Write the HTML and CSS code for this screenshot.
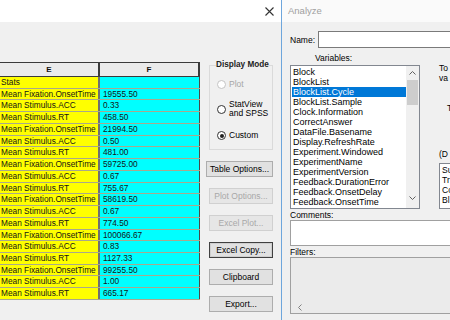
FILE: index.html
```html
<!doctype html>
<html>
    <head>
        <title>Analyze</title>
        <meta charset="utf-8">
        <link rel="stylesheet" href="styles.css">
    </head>
    <body>
        <div class="leftwin">
            <div class="titlebar">
                <svg class="close" width="9" height="9" viewBox="0 0 9 9"><path d="M0.5 0.5 L8.5 8.5 M8.5 0.5 L0.5 8.5" stroke="#333" stroke-width="1.1" fill="none"/></svg>
            </div>
            <div class="leftbody">
                <div class="sheet">
                    <div class="sheethead">
                        <div class="hcol colE">E</div>
                        <div class="hcol colF">F</div>
                    </div>
                    <div class="row"><div class="cellE">Stats</div><div class="cellF"></div></div>
                    <div class="row"><div class="cellE">Mean Fixation.OnsetTime</div><div class="cellF">19555.50</div></div>
                    <div class="row"><div class="cellE">Mean Stimulus.ACC</div><div class="cellF">0.33</div></div>
                    <div class="row"><div class="cellE">Mean Stimulus.RT</div><div class="cellF">458.50</div></div>
                    <div class="row"><div class="cellE">Mean Fixation.OnsetTime</div><div class="cellF">21994.50</div></div>
                    <div class="row"><div class="cellE">Mean Stimulus.ACC</div><div class="cellF">0.50</div></div>
                    <div class="row"><div class="cellE">Mean Stimulus.RT</div><div class="cellF">481.00</div></div>
                    <div class="row"><div class="cellE">Mean Fixation.OnsetTime</div><div class="cellF">59725.00</div></div>
                    <div class="row"><div class="cellE">Mean Stimulus.ACC</div><div class="cellF">0.67</div></div>
                    <div class="row"><div class="cellE">Mean Stimulus.RT</div><div class="cellF">755.67</div></div>
                    <div class="row"><div class="cellE">Mean Fixation.OnsetTime</div><div class="cellF">58619.50</div></div>
                    <div class="row"><div class="cellE">Mean Stimulus.ACC</div><div class="cellF">0.67</div></div>
                    <div class="row"><div class="cellE">Mean Stimulus.RT</div><div class="cellF">774.50</div></div>
                    <div class="row"><div class="cellE">Mean Fixation.OnsetTime</div><div class="cellF">100066.67</div></div>
                    <div class="row"><div class="cellE">Mean Stimulus.ACC</div><div class="cellF">0.83</div></div>
                    <div class="row"><div class="cellE">Mean Stimulus.RT</div><div class="cellF">1127.33</div></div>
                    <div class="row"><div class="cellE">Mean Fixation.OnsetTime</div><div class="cellF">99255.50</div></div>
                    <div class="row"><div class="cellE">Mean Stimulus.ACC</div><div class="cellF">1.00</div></div>
                    <div class="row"><div class="cellE">Mean Stimulus.RT</div><div class="cellF">665.17</div></div>
                </div>
                <div class="side">
                    <fieldset class="modebox">
                        <legend>Display Mode</legend>
                        <div class="radio disabled plotradio"><span class="dot"></span>Plot</div>
                        <div class="radio statradio"><span class="dot"></span><span>StatView<br>and SPSS</span></div>
                        <div class="radio customradio"><span class="dot checked"></span>Custom</div>
                    </fieldset>
                    <button class="btn wide">Table Options...</button>
                    <button class="btn" disabled>Plot Options...</button>
                    <button class="btn" disabled>Excel Plot...</button>
                    <button class="btn default">Excel Copy...</button>
                    <button class="btn">Clipboard</button>
                    <button class="btn">Export...</button>
                </div>
            </div>
        </div>
        <div class="anwin">
            <div class="antitle">Analyze</div>
            <div class="anbody">
                <div class="namerow">
                    <span class="namelabel">Name:</span>
                    <div class="namebox"></div>
                </div>
                <div class="vars">
                    <div class="varscol">
                        <div class="varslabel">Variables:</div>
                        <div class="listbox">
                            <div class="items">
                                <div class="item">Block</div>
                                <div class="item">BlockList</div>
                                <div class="item selected">BlockList.Cycle</div>
                                <div class="item">BlockList.Sample</div>
                                <div class="item">Clock.Information</div>
                                <div class="item">CorrectAnswer</div>
                                <div class="item">DataFile.Basename</div>
                                <div class="item">Display.RefreshRate</div>
                                <div class="item">Experiment.Windowed</div>
                                <div class="item">ExperimentName</div>
                                <div class="item">ExperimentVersion</div>
                                <div class="item">Feedback.DurationError</div>
                                <div class="item">Feedback.OnsetDelay</div>
                                <div class="item">Feedback.OnsetTime</div>
                            </div>
                            <div class="vscroll">
                                <div class="arrow"><svg width="7" height="4" viewBox="0 0 7 4"><path d="M0.5 3.5 L3.5 0.5 L6.5 3.5" stroke="#606060" fill="none"/></svg></div>
                                <div class="thumb"></div>
                                <div class="track"></div>
                                <div class="arrow down"><svg width="7" height="4" viewBox="0 0 7 4"><path d="M0.5 0.5 L3.5 3.5 L6.5 0.5" stroke="#606060" fill="none"/></svg></div>
                            </div>
                        </div>
                    </div>
                    <div class="varsside">
                        <div class="sidetext first">To</div>
                        <div class="sidetext">va</div>
                        <div class="sidetext gapT">T</div>
                        <div class="sidetext gapD">(D</div>
                        <div class="smallbox">
                            <div>Su</div>
                            <div>Tr</div>
                            <div>Co</div>
                            <div>Bl</div>
                        </div>
                    </div>
                </div>
                <div class="anlabel">Comments:</div>
                <div class="commentbox"></div>
                <div class="anlabel">Filters:</div>
                <div class="filterbox">
                    <div class="hscroll"><svg width="4" height="7" viewBox="0 0 4 7"><path d="M3.5 0.5 L0.5 3.5 L3.5 6.5" stroke="#808080" fill="none"/></svg></div>
                </div>
            </div>
        </div>
    </body>
</html>
```

FILE: styles.css
```css
body {
    margin: 0;
    width: 450px;
    height: 320px;
    overflow: hidden;
    display: flex;
    background: #f0f0f0;
    font-family: "Liberation Sans", Arial, sans-serif;
    color: #000;
}
.leftwin {
    width: 281px;
    height: 320px;
    border-right: 1px solid #6ea6dc;
    display: flex;
    flex-direction: column;
    flex: none;
}
.titlebar {
    height: 22px;
    background: #fff;
    display: flex;
    align-items: center;
    justify-content: flex-end;
    padding-right: 7px;
}
.leftbody {
    flex: 1;
    display: flex;
    background: #f0f0f0;
}
.sheet {
    width: 200px;
    margin-top: 40px;
    font-size: 8.3px;
    color: #141414;
}
.sheethead {
    display: flex;
    height: 15px;
    box-sizing: border-box;
    border-top: 1px solid #3a3a3a;
    border-bottom: 1px solid #3a3a3a;
    background: #ebebeb;
    font-weight: bold;
    font-size: 8px;
    line-height: 13px;
}
.hcol {
    text-align: center;
    border-right: 2px solid #3a3a3a;
}
.colE {
    width: 98px;
}
.colF {
    width: 98px;
}
.row {
    display: flex;
    height: 11.74px;
    box-sizing: border-box;
    border-bottom: 1px solid #a8a88c;
    line-height: 11px;
}
.cellE {
    width: 97px;
    padding-left: 1px;
    background: #ffff00;
    border-right: 2px solid #707070;
    white-space: nowrap;
    overflow: hidden;
}
.cellF {
    width: 96px;
    padding-left: 3px;
    background: #00ffff;
    border-right: 1px solid #4a4a4a;
}
.side {
    width: 64px;
    margin-left: 9px;
    display: flex;
    flex-direction: column;
}
.modebox {
    margin: 38px 0 0 0;
    padding: 0 0 0 7px;
    height: 90px;
    box-sizing: border-box;
    border: 1px solid #dadada;
    font-size: 8.5px;
}
.modebox legend {
    padding: 0;
    margin-left: -1px;
    font-weight: bold;
    font-size: 8.2px;
    color: #222;
    line-height: 10px;
    white-space: nowrap;
}
.radio {
    display: flex;
    align-items: center;
    gap: 3px;
    height: 11px;
    line-height: 9px;
}
.plotradio {
    margin-top: 9px;
}
.statradio {
    margin-top: 10px;
    height: 18px;
}
.customradio {
    margin-top: 12px;
}
.disabled {
    color: #a6a6a6;
}
.dot {
    width: 7px;
    height: 7px;
    border: 1px solid #333;
    border-radius: 50%;
    background: #fff;
    flex: none;
    display: flex;
    align-items: center;
    justify-content: center;
}
.disabled .dot {
    border-color: #c4c4c4;
}
.dot.checked::after {
    content: "";
    width: 4px;
    height: 4px;
    border-radius: 50%;
    background: #222;
}
.btn {
    width: 64px;
    height: 16px;
    margin-top: 11px;
    padding: 0;
    font-family: "Liberation Sans", Arial, sans-serif;
    font-size: 8.5px;
    color: #000;
    background: #e1e1e1;
    border: 1px solid #adadad;
    white-space: nowrap;
}
.btn.wide {
    width: 67px;
    margin-left: -3px;
}
.btn:disabled {
    color: #a8a8a8;
    background: #e6e6e6;
    border-color: #d0d0d0;
}
.btn.default {
    border: 1px solid #404040;
    box-shadow: inset 0 0 0 1px #cfcfcf;
}
.anwin {
    flex: 1;
    display: flex;
    flex-direction: column;
    overflow: hidden;
    background: #f0f0f0;
}
.antitle {
    height: 22px;
    flex: none;
    background: #fafafa;
    color: #a0a0a0;
    font-size: 9.5px;
    line-height: 22px;
    padding-left: 6px;
}
.anbody {
    padding-left: 8px;
    font-size: 8.5px;
}
.namerow {
    display: flex;
    align-items: center;
    margin-top: 9px;
    height: 17px;
}
.namelabel {
    width: 28px;
    flex: none;
}
.namebox {
    width: 160px;
    height: 17px;
    box-sizing: border-box;
    flex: none;
    border: 1px solid #7a7a7a;
    background: #fff;
}
.vars {
    display: flex;
}
.varscol {
    width: 130px;
    flex: none;
}
.varslabel {
    margin: 5px 0 0 25px;
    line-height: 10px;
}
.listbox {
    margin-top: 2px;
    height: 144px;
    box-sizing: border-box;
    border: 1px solid #828790;
    background: #fff;
    display: flex;
}
.items {
    flex: 1;
    padding: 1px 0 0 1px;
    overflow: hidden;
    font-size: 9px;
}
.item {
    height: 10px;
    line-height: 10px;
    padding-left: 1px;
    white-space: nowrap;
}
.item.selected {
    background: #0078d7;
    color: #fff;
}
.vscroll {
    width: 13px;
    background: #f0f0f0;
    display: flex;
    flex-direction: column;
}
.arrow {
    height: 13px;
    display: flex;
    align-items: center;
    justify-content: center;
}
.arrow.down {
    margin-bottom: 4px;
}
.thumb {
    height: 25px;
    margin: 1px 1px 0 1px;
    background: #cdcdcd;
}
.track {
    flex: 1;
}
.varsside {
    margin-left: 19px;
    width: 40px;
    flex: none;
}
.sidetext {
    line-height: 10px;
    height: 10px;
    white-space: nowrap;
}
.sidetext.first {
    margin-top: 15px;
}
.sidetext.gapT {
    margin: 20px 0 0 8px;
}
.sidetext.gapD {
    margin-top: 36px;
}
.smallbox {
    margin-top: 4px;
    height: 46px;
    width: 30px;
    box-sizing: border-box;
    border: 1px solid #828790;
    background: #fff;
    padding: 1px 0 0 2px;
    line-height: 10px;
}
.anlabel {
    margin-top: 1px;
    line-height: 10px;
    height: 10px;
}
.commentbox {
    width: 200px;
    height: 26px;
    box-sizing: border-box;
    border: 1px solid #a0a0a0;
    background: #fff;
}
.filterbox {
    width: 200px;
    height: 57px;
    box-sizing: border-box;
    border: 1px solid #a0a0a0;
    background: #ebebeb;
    display: flex;
    flex-direction: column;
    justify-content: flex-end;
}
.hscroll {
    height: 12px;
    padding-left: 7px;
    display: flex;
    align-items: center;
}
```
